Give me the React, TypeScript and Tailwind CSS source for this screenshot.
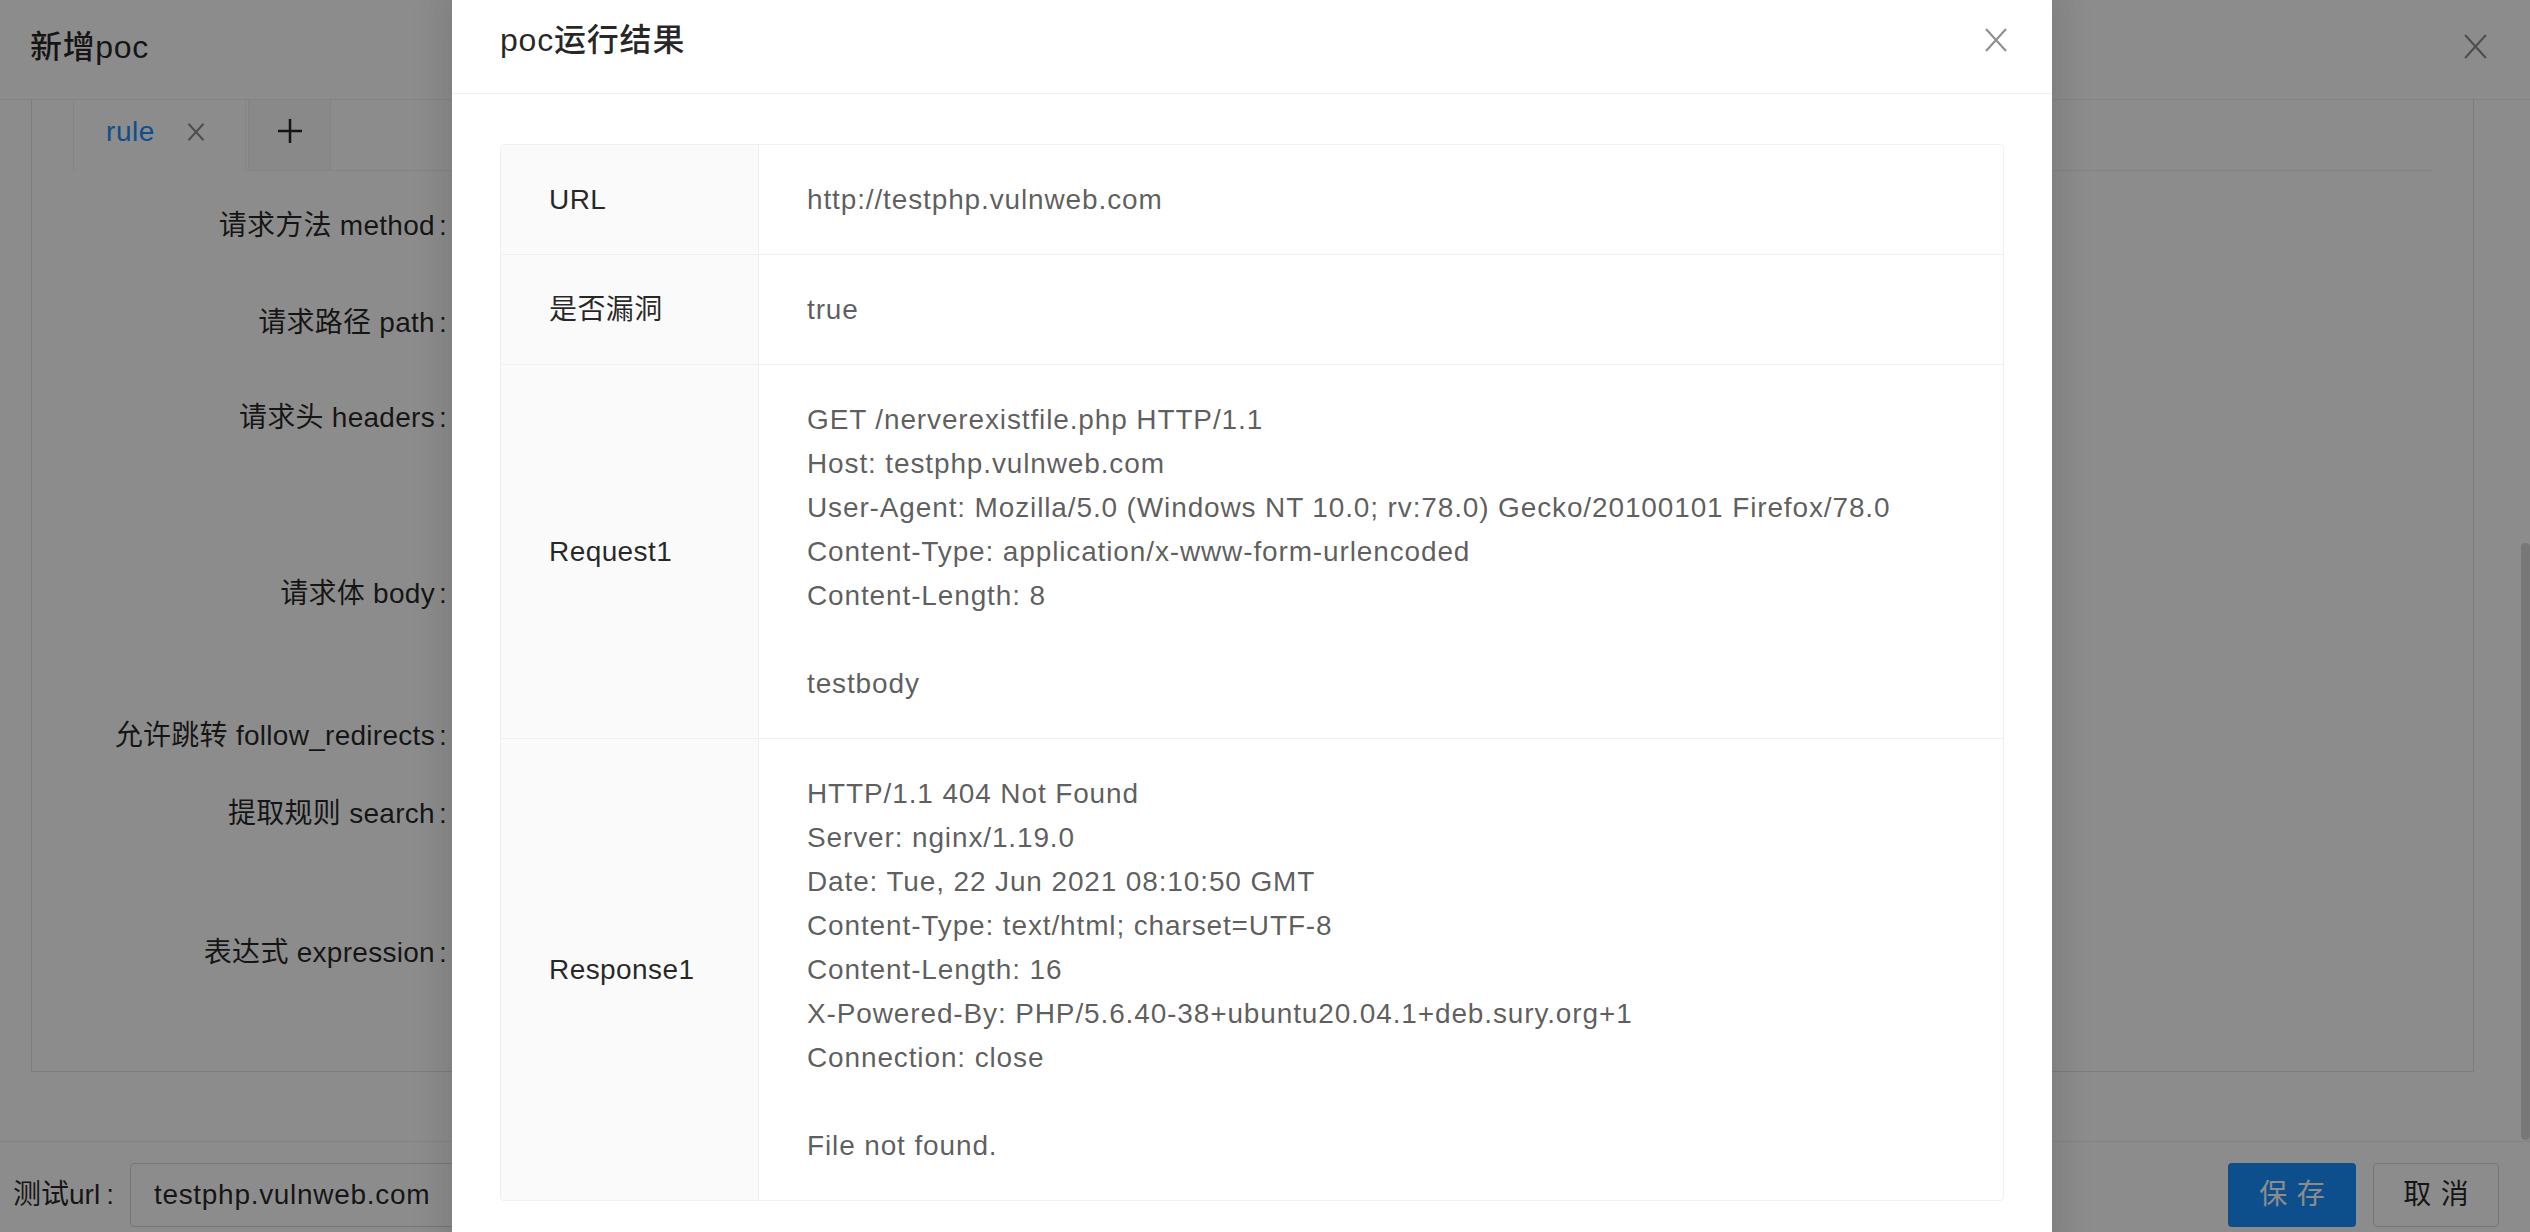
import React from 'react';

type Field = { label: string; rowClass: string };

const fields: Field[] = [
    { label: '请求方法 method', rowClass: 'h-[97px]' },
    { label: '请求路径 path', rowClass: 'h-[95px]' },
    { label: '请求头 headers', rowClass: 'h-[176px]' },
    { label: '请求体 body', rowClass: 'h-[142px]' },
    { label: '允许跳转 follow_redirects', rowClass: 'h-[78px]' },
    { label: '提取规则 search', rowClass: 'h-[139px]' },
    { label: '表达式 expression', rowClass: 'h-[64px]' },
];

const requestText = `GET /nerverexistfile.php HTTP/1.1
Host: testphp.vulnweb.com
User-Agent: Mozilla/5.0 (Windows NT 10.0; rv:78.0) Gecko/20100101 Firefox/78.0
Content-Type: application/x-www-form-urlencoded
Content-Length: 8

testbody`;

const responseText = `HTTP/1.1 404 Not Found
Server: nginx/1.19.0
Date: Tue, 22 Jun 2021 08:10:50 GMT
Content-Type: text/html; charset=UTF-8
Content-Length: 16
X-Powered-By: PHP/5.6.40-38+ubuntu20.04.1+deb.sury.org+1
Connection: close

File not found.`;

const results = [
    { label: 'URL', value: 'http://testphp.vulnweb.com' },
    { label: '是否漏洞', value: 'true' },
    { label: 'Request1', value: requestText },
    { label: 'Response1', value: responseText },
];

const CloseIcon: React.FC<{ className?: string; strokeWidth?: number }> = ({ className, strokeWidth = 2 }) => (
    <svg viewBox="0 0 22 24" className={className} fill="none" stroke="currentColor" strokeWidth={strokeWidth}>
        <path d="M1 1L21 23M21 1L1 23" />
    </svg>
);

const PlusIcon: React.FC<{ className?: string }> = ({ className }) => (
    <svg viewBox="0 0 24 24" className={className} fill="none" stroke="currentColor" strokeWidth="2.5">
        <path d="M12 0v24M0 12h24" />
    </svg>
);

const PocDrawer: React.FC = () => {
    return (
        <div className="flex h-full flex-col">
            <header className="flex h-[100px] shrink-0 items-center justify-between border-b border-[#f0f0f0] pb-[6px] pl-[30px] pr-[43px]">
                <h1 className="text-[32px] font-medium leading-[44px] tracking-[0.02em]">新增poc</h1>
                <CloseIcon className="h-[25px] w-[23px] text-black/45" />
            </header>

            <div className="relative h-[1041px] shrink-0 overflow-hidden">
                <div className="-mt-[50px] ml-[31px] mr-[56px] flex h-[1022px] flex-col border border-[#e3e3e3] px-[41px] pt-[40px]">
                    {/* tabs */}
                    <div className="flex h-[80px] shrink-0">
                        <div className="flex w-[173px] items-center gap-[32px] rounded-t-[4px] border-x border-t border-[#f0f0f0] bg-white pl-[32px]">
                            <span className="text-[28px] leading-[44px] tracking-[0.02em] text-[#1890ff]">rule</span>
                            <CloseIcon className="h-[18px] w-[18px] text-black/45" strokeWidth={2.6} />
                        </div>
                        <div className="w-[2px] border-b border-[#f0f0f0]" />
                        <div className="flex w-[83px] items-center justify-center rounded-t-[4px] border border-[#f0f0f0] bg-[#fafafa]">
                            <PlusIcon className="h-[24px] w-[24px]" />
                        </div>
                        <div className="flex-1 border-b border-[#f0f0f0]" />
                    </div>

                    {/* form */}
                    <div className="mt-[23px] flex flex-col">
                        {fields.map(field => (
                            <div key={field.label} className={`flex shrink-0 ${field.rowClass}`}>
                                <label className="w-[390px] text-right text-[28px] leading-[64px] tracking-[0.01em]">
                                    {field.label}
                                    <span className="ml-[4px] mr-[16px]">:</span>
                                </label>
                            </div>
                        ))}
                    </div>
                </div>
                <div className="absolute right-0 top-[443px] h-[597px] w-[9px] rounded-full bg-[#dadada]" />
            </div>

            <footer className="flex h-[91px] shrink-0 items-start justify-between border-t border-[#f0f0f0] pl-[13px] pr-[31px] pt-[21px]">
                <div className="flex items-center text-[28px]">
                    <span className="leading-[64px]">
                        测试url<span className="ml-[6px] mr-[16px]">:</span>
                    </span>
                    <input
                        readOnly
                        value="testphp.vulnweb.com"
                        className="h-[64px] w-[840px] rounded-[4px] border border-[#d9d9d9] bg-white px-[23px] text-[28px] tracking-[0.025em] outline-none"
                    />
                </div>
                <div className="flex gap-[17px] text-[28px]">
                    <button className="h-[64px] w-[128px] rounded-[4px] bg-[#1890ff] text-white">
                        <span className="mr-[-0.34em] tracking-[0.34em]">保存</span>
                    </button>
                    <button className="h-[64px] w-[126px] rounded-[4px] border border-[#d9d9d9] bg-white">
                        <span className="mr-[-0.34em] tracking-[0.34em]">取消</span>
                    </button>
                </div>
            </footer>
        </div>
    );
};

const ResultModal: React.FC = () => {
    return (
        <div className="absolute left-[452px] top-[-14px] w-[1600px] rounded-[4px] bg-white shadow-[0_12px_32px_16px_rgba(0,0,0,0.05),0_12px_32px_rgba(0,0,0,0.08)]">
            <div className="flex h-[108px] items-center justify-between border-b border-[#f0f0f0] pl-[48px] pr-[45px]">
                <h2 className="text-[32px] font-medium leading-[44px] tracking-[0.025em] text-black/85">poc运行结果</h2>
                <CloseIcon className="h-[24px] w-[22px] text-black/45" />
            </div>
            <div className="px-[48px] pb-[48px] pt-[50px]">
                <div className="overflow-hidden rounded-[4px] border border-[#f0f0f0] text-[28px] leading-[44px]">
                    {results.map((row, i) => (
                        <div
                            key={row.label}
                            className={`grid grid-cols-[258px_1fr] ${i > 0 ? 'border-t border-[#f0f0f0]' : ''}`}
                        >
                            <div className="flex items-center border-r border-[#f0f0f0] bg-[#fafafa] px-[48px] pb-[32px] pt-[33px] tracking-[0.015em] text-black/85">
                                {row.label}
                            </div>
                            <div className="whitespace-pre-wrap px-[48px] pb-[32px] pt-[33px] tracking-[0.031em] text-black/65">
                                {row.value}
                            </div>
                        </div>
                    ))}
                </div>
            </div>
        </div>
    );
};

const App: React.FC = () => {
    return (
        <div className="relative h-[1232px] w-full overflow-hidden bg-white font-['Liberation_Sans','Noto_Sans_CJK_SC',sans-serif] text-black/85">
            <PocDrawer />
            <div className="absolute inset-0 bg-black/45" />
            <ResultModal />
        </div>
    );
};

export default App;
